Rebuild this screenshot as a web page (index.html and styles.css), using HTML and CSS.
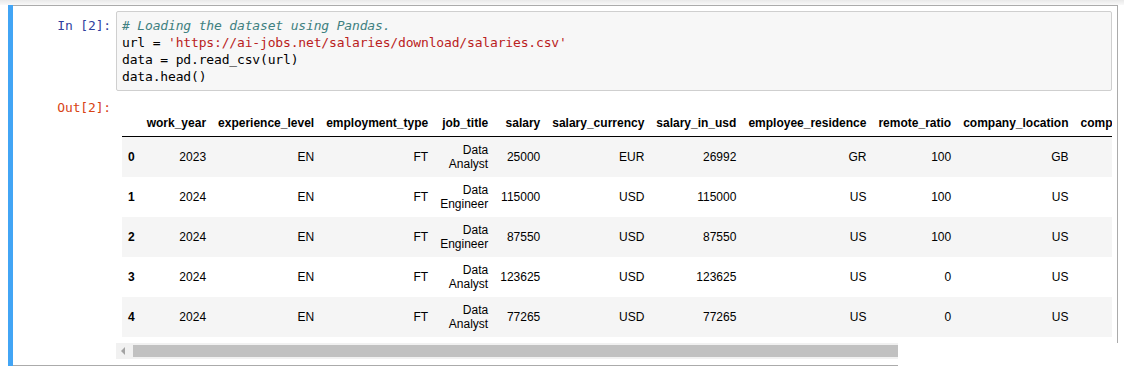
FILE: index.html
```html
<!DOCTYPE html>
<html>
<head>
    <title>Notebook cell</title>
    <link rel="stylesheet" href="styles.css">
</head>
<body>
    <div class="cell">
        <div class="cell-body">
            <div class="input">
                <div class="prompt in-prompt">In&nbsp;[2]:</div>
                <div class="input-area">
<pre class="code"><span class="c"># Loading the dataset using Pandas.</span>
url = <span class="s">'https://ai-jobs.net/salaries/download/salaries.csv'</span>
data = pd.read_csv(url)
data.head()</pre>
                </div>
            </div>

            <div class="output">
                <div class="prompt out-prompt">Out[2]:</div>
                <div class="output-subarea">
                    <table class="dataframe">
                        <thead>
                            <tr>
                                <th></th>
                                <th>work_year</th>
                                <th>experience_level</th>
                                <th>employment_type</th>
                                <th>job_title</th>
                                <th>salary</th>
                                <th>salary_currency</th>
                                <th>salary_in_usd</th>
                                <th>employee_residence</th>
                                <th>remote_ratio</th>
                                <th>company_location</th>
                                <th>company_size</th>
                            </tr>
                        </thead>
                        <tbody>
                            <tr>
                                <th>0</th><td>2023</td><td>EN</td><td>FT</td><td>Data Analyst</td><td>25000</td><td>EUR</td><td>26992</td><td>GR</td><td>100</td><td>GB</td><td>M</td>
                            </tr>
                            <tr>
                                <th>1</th><td>2024</td><td>EN</td><td>FT</td><td>Data Engineer</td><td>115000</td><td>USD</td><td>115000</td><td>US</td><td>100</td><td>US</td><td>M</td>
                            </tr>
                            <tr>
                                <th>2</th><td>2024</td><td>EN</td><td>FT</td><td>Data Engineer</td><td>87550</td><td>USD</td><td>87550</td><td>US</td><td>100</td><td>US</td><td>M</td>
                            </tr>
                            <tr>
                                <th>3</th><td>2024</td><td>EN</td><td>FT</td><td>Data Analyst</td><td>123625</td><td>USD</td><td>123625</td><td>US</td><td>0</td><td>US</td><td>M</td>
                            </tr>
                            <tr>
                                <th>4</th><td>2024</td><td>EN</td><td>FT</td><td>Data Analyst</td><td>77265</td><td>USD</td><td>77265</td><td>US</td><td>0</td><td>US</td><td>M</td>
                            </tr>
                        </tbody>
                    </table>
                </div>
            </div>
        </div>

        <div class="cell-foot">
            <div class="hscroll">
                <span class="hscroll-arrow"></span>
                <span class="hscroll-thumb"></span>
            </div>
        </div>
    </div>
</body>
</html>
```

FILE: styles.css
```css
body {
    margin: 0;
    background: linear-gradient(#e9e9e9, #f9f9f9 5px, #fff 5px) no-repeat;
    font-family: "Liberation Sans", Arial, sans-serif;
}

.cell {
    margin: 5px 0 0 8px;
    width: 1110px;
    border-left: 5px solid #42a5f5;
    box-sizing: border-box;
}

.cell-body {
    border-top: 1px solid #ababab;
    border-right: 1px solid #ababab;
    padding: 5px 5px 0 0;
}

.input,
.output {
    display: flex;
}

.prompt {
    width: 103px;
    flex: none;
    box-sizing: border-box;
    padding: 6px 5px 0 0;
    text-align: right;
    font-family: "DejaVu Sans Mono", monospace;
    font-size: 13px;
    letter-spacing: -0.16px;
    line-height: 17px;
}

.in-prompt {
    color: #303f9f;
}

.out-prompt {
    color: #d84315;
    padding-top: 7px;
}

.input-area {
    flex: 1;
    min-width: 0;
    background: #f7f7f7;
    border: 1px solid #cfcfcf;
    border-radius: 2px;
}

.code {
    margin: 0;
    padding: 5px 5px;
    font-family: "DejaVu Sans Mono", monospace;
    font-size: 13px;
    letter-spacing: -0.16px;
    line-height: 17px;
    color: #000;
}

.code .c {
    color: #408080;
    font-style: italic;
}

.code .s {
    color: #ba2121;
}

.output {
    margin-top: 1px;
}

.output-subarea {
    flex: 1;
    min-width: 0;
    overflow: hidden;
    padding: 6px;
}

.dataframe {
    margin: 12px 0 0 0;
    border: none;
    border-collapse: collapse;
    border-spacing: 0;
    font-size: 12px;
    color: #000;
}

.dataframe thead {
    border-bottom: 1px solid #000;
}

.dataframe th,
.dataframe td {
    padding: 6px;
    text-align: right;
    vertical-align: middle;
    line-height: 14px;
}

.dataframe th {
    font-weight: bold;
}

.dataframe tbody tr:nth-child(odd) {
    background: #f5f5f5;
}

.cell-foot {
    width: 885px;
    padding: 0 0 6px 103px;
    border-bottom: 1px solid #ababab;
    box-sizing: border-box;
}

.hscroll {
    display: flex;
    align-items: center;
    width: 782px;
    height: 16px;
    background: #f1f1f1;
}

.hscroll-arrow {
    width: 0;
    height: 0;
    margin: 0 8px 0 5px;
    border-top: 4px solid transparent;
    border-bottom: 4px solid transparent;
    border-right: 4px solid #a3a3a3;
}

.hscroll-thumb {
    flex: 1;
    height: 12px;
    background: #c1c1c1;
}
```
